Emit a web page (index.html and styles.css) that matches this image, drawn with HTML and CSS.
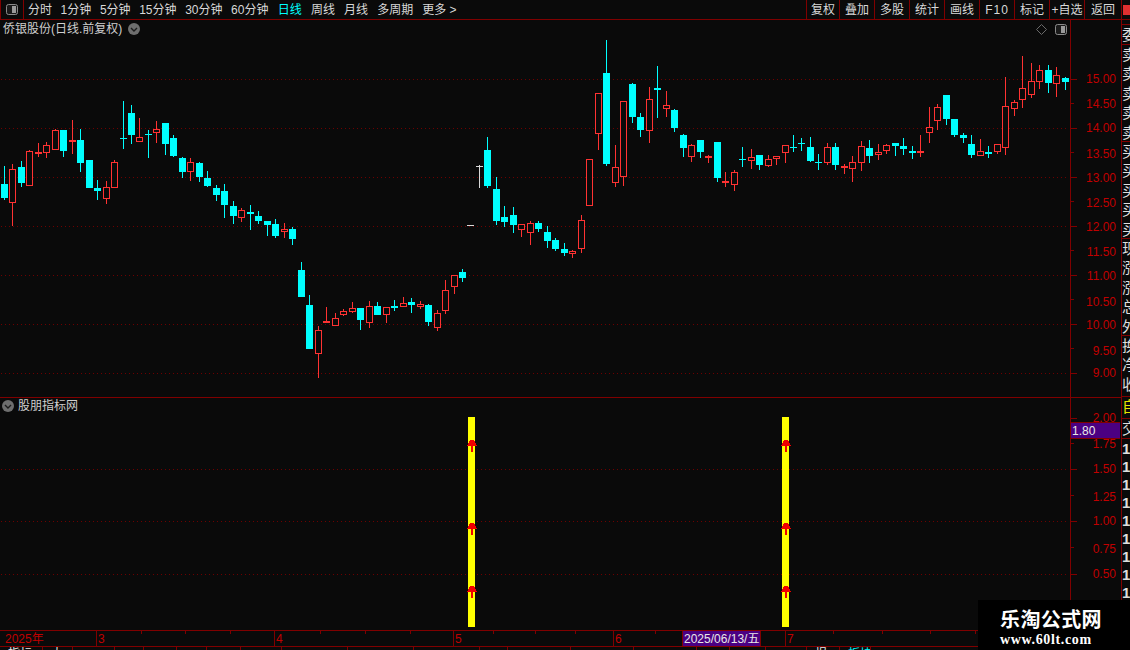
FILE: index.html
```html
<!DOCTYPE html>
<html lang="zh-CN">
<head>
<meta charset="utf-8">
<title>侨银股份 日线</title>
<link rel="stylesheet" href="styles.css">
</head>
<body>
<div class="app">
  <header class="toolbar">
    <div class="layout-btn">
      <svg class="panel-icon" viewBox="0 0 12 11"><rect x="0.5" y="0.5" width="11" height="10" rx="2" class="pi-frame"/><rect x="6" y="2" width="4" height="7" class="pi-fill"/></svg>
    </div>
    <nav class="periods">
      <div class="period-group first">
        <span>分时</span><span>1分钟</span><span>5分钟</span><span>15分钟</span><span>30分钟</span><span>60分钟</span>
      </div>
      <div class="period-group second">
        <span class="active">日线</span><span>周线</span><span>月线</span><span>多周期</span><span>更多 &gt;</span>
      </div>
    </nav>
    <div class="actions">
      <span class="narrow">复权</span><span>叠加</span><span>多股</span><span>统计</span><span>画线</span><span class="fkey">F10</span><span>标记</span><span>+自选</span><span class="wide">返回</span>
    </div>
    <div class="corner"><i class="corner-mark"></i></div>
  </header>

  <div class="workspace">
    <div class="panes">
      <section class="pane pane-main">
        <div class="plot">
          <svg id="main-plot" class="canvas" viewBox="0 20 1070 377" width="1070" height="377"></svg>
          <div class="pane-title title-main">
            <span>侨银股份(日线.前复权)</span>
            <svg class="chev" viewBox="0 0 12 12"><circle cx="6" cy="6" r="6" class="chev-bg"/><path d="M3 5l3 3 3-3" class="chev-line"/></svg>
          </div>
          <div class="plot-tools">
            <svg class="diamond" viewBox="0 0 11 11"><path d="M5.5 .5l5 5-5 5-5-5z"/></svg>
            <svg class="panel-icon" viewBox="0 0 12 11"><rect x="0.5" y="0.5" width="11" height="10" rx="2" class="pi-frame"/><rect x="6" y="2" width="4" height="7" class="pi-fill"/></svg>
          </div>
        </div>
        <div class="axis"><svg id="main-axis" class="canvas" viewBox="1071 20 50 377" width="50" height="377"></svg></div>
      </section>
      <section class="pane pane-sub">
        <div class="plot">
          <svg id="sub-plot" class="canvas" viewBox="0 398 1070 232" width="1070" height="232"></svg>
          <div class="pane-title title-sub">
            <svg class="chev" viewBox="0 0 12 12"><circle cx="6" cy="6" r="6" class="chev-bg"/><path d="M3 5l3 3 3-3" class="chev-line"/></svg>
            <span>股朋指标网</span>
          </div>
        </div>
        <div class="axis"><svg id="sub-axis" class="canvas" viewBox="1071 398 50 232" width="50" height="232"></svg></div>
      </section>
      <div class="timeline"><svg id="time-axis" class="canvas" viewBox="0 631 1121 15" width="1121" height="15"></svg></div>
      <div class="tabs" id="tabs"></div>
    </div>

    <aside class="side">
      <div class="side-block b-top"></div>
      <div class="side-block b-ratio"><p>委比</p></div>
      <div class="side-block b-five"><p>卖</p><p>卖</p><p>卖</p><p>卖</p><p>卖</p></div>
      <div class="side-block b-five"><p>买</p><p>买</p><p>买</p><p>买</p><p>买</p></div>
      <div class="side-block b-five"><p>现</p><p>涨</p><p>涨</p><p>总</p><p>外</p></div>
      <div class="side-block b-three"><p>换</p><p>净</p><p>收</p></div>
      <div class="side-block b-self"><p>自</p></div>
      <div class="side-block b-deal"><p>交</p></div>
      <div class="side-ticks"><p>1</p><p>1</p><p>1</p><p>1</p><p>1</p><p>1</p><p>1</p><p>1</p><p>1</p></div>
    </aside>
  </div>

  <div class="watermark">
    <strong>乐淘公式网</strong>
    <em>www.60lt.com</em>
  </div>
</div>
<script src="chart.js"></script>
</body>
</html>
```
FILE: styles.css
```css
* { box-sizing: border-box; }
html, body { margin: 0; padding: 0; background: #0a0a0a; }
body { width: 1130px; height: 650px; overflow: hidden; font: 12px/1 "Liberation Sans", "Noto Sans CJK SC", sans-serif; color: #d8d8d8; }
p { margin: 0; }

.app { position: relative; width: 1130px; height: 650px; display: flex; flex-direction: column; }

.toolbar { flex: none; height: 20px; display: flex; align-items: stretch; border-bottom: 1px solid #800000; }
.layout-btn { flex: none; width: 24px; display: flex; align-items: center; justify-content: center; border-left: 1px solid #800000; border-right: 1px solid #800000; }
.panel-icon { width: 12px; height: 11px; display: block; }
.pi-frame { fill: #1a1a1a; stroke: #8a8a8a; stroke-width: 1; }
.pi-fill { fill: #9a9a9a; }

.periods { flex: none; width: 782px; display: flex; align-items: center; padding-left: 4px; }
.period-group { display: flex; }
.period-group.first { gap: 8.6px; }
.period-group.second { gap: 9.1px; margin-left: 9.4px; }
.active { color: #00ffff; }

.actions { flex: none; display: flex; }
.actions span { width: 35px; border-left: 1px solid #800000; display: flex; align-items: center; justify-content: center; }
.actions .narrow { width: 33px; }
.actions .wide { width: 37px; }
.actions .fkey { letter-spacing: 1px; }
.corner { flex: 1; border-left: 1px solid #800000; display: flex; justify-content: flex-end; align-items: center; }
.corner-mark { width: 7px; height: 10px; background: #e03030; display: block; }

.workspace { flex: 1; min-height: 0; display: flex; }
.panes { flex: none; width: 1121px; display: flex; flex-direction: column; }
.pane { flex: none; display: flex; }
.pane-main { height: 378px; border-bottom: 1px solid #800000; }
.pane-sub { height: 232px; }
.plot { position: relative; flex: none; width: 1070px; }
.axis { flex: none; width: 51px; border-left: 1px solid #800000; }
.canvas { display: block; }

.pane-title { position: absolute; display: flex; align-items: center; gap: 6px; color: #cfcfcf; }
.title-main { left: 3px; top: 3px; }
.title-sub { left: 2px; top: 2px; gap: 4px; }
.chev { width: 12px; height: 12px; display: block; }
.chev-bg { fill: #6e6e6e; }
.chev-line { fill: none; stroke: #1c1c1c; stroke-width: 1.4; }
.plot-tools { position: absolute; right: 3px; top: 4px; display: flex; align-items: center; gap: 8px; }
.diamond { width: 11px; height: 11px; display: block; }
.diamond path { fill: none; stroke: #6a6a6a; }

.timeline { flex: none; height: 17px; border-top: 1px solid #800000; border-bottom: 1px solid #800000; }
.tabs { flex: 1; display: flex; overflow: hidden; }
.tab { flex: none; height: 3px; border-right: 1px solid #800000; overflow: hidden; padding-left: 8px; line-height: 14px; white-space: nowrap; color: #e8e8e8; }
.tab-active { color: #00ffff; }

.side { flex: 1; min-width: 0; border-left: 1px solid #800000; overflow: hidden; font-size: 15px; color: #dedede; }
.side p { white-space: nowrap; height: 19.4px; line-height: 19.4px; }
.side-block { border-bottom: 1px solid #800000; overflow: hidden; }
.b-top { height: 5px; }
.b-ratio { height: 20px; }
.b-five { height: 97px; }
.b-three { height: 61px; }
.b-self { height: 22px; color: #e6e600; }
.b-deal { height: 20px; }
.side-ticks p { height: 18px; line-height: 18px; font-weight: bold; }
.side-ticks { padding-top: 1px; }

.watermark { position: absolute; left: 978px; top: 600px; width: 152px; height: 50px; background: #000; color: #fff; display: flex; flex-direction: column; align-items: flex-start; padding: 8px 0 0 22px; }
.watermark strong { font: bold 20px/22px "Noto Sans CJK SC", sans-serif; width: 102px; letter-spacing: .4px; white-space: nowrap; }
.watermark em { font: bold 14px/16px "Liberation Serif", serif; margin-top: 2px; letter-spacing: .65px; }

.grid { stroke: #6e0000; stroke-width: 1; stroke-dasharray: 1 3; fill: none; }
.wick-c { fill: #00ffff; }
.wick-r { fill: #ff3232; }
.wick-w { fill: #d8d8d8; }
.body-hollow { fill: #0a0a0a; stroke: #ff3232; stroke-width: 1; }
.bar { fill: #ffff00; }
.arrow { fill: #f00000; shape-rendering: crispEdges; }
.tick { fill: #800000; }
.label { fill: #c00000; font-size: 12px; }
.tag { fill: #4b0082; }
.tag-text { fill: #e8e8e8; font-size: 12px; }
```
FILE: chart.js
```js
var NS = "http://www.w3.org/2000/svg";
function el(parent, name, attrs, text) {
  var n = document.createElementNS(NS, name);
  for (var k in attrs) n.setAttribute(k, attrs[k]);
  if (text) n.textContent = text;
  parent.appendChild(n);
  return n;
}
function rect(p, x, y, w, h, cls) { el(p, "rect", { x: x, y: y, width: w, height: h, "class": cls }); }

/* type, wick top, wick bottom, body top, body bottom; "R" is a filled red body */
var groups = [
  { o: 100, s: 3, rows: [
    ["c",198,300,252,294],["r",192,378,208,308],["c",183,261,201,249],["r",150,258,154,257],["R",129,171,156,161],
    ["r",126,174,136,158],["r",88,150,91,149],["c",90,171,90,153],["R",60,162,120,126],["c",87,216,120,189],
    ["c",180,264,180,264],["c",240,300,264,273],["r",243,312,262,296],["r",180,264,187,263],["c",3,147,114,117],
    ["c",15,132,39,105],["r",54,126,112,125],["c",90,174,102,105],["r",63,129,88,98],["c",69,165,69,132],
    ["c",105,171,114,168],["c",171,234,174,216],["r",174,243,187,215],["c",186,246,189,231],["c",213,261,234,258],
    ["c",255,303,264,285],["c",252,354,273,315],["c",303,372,318,348],["r",324,366,331,353],["c",315,390,336,342],
    ["c",333,372,348,363],["c",363,408,363,375],["c",357,414,372,408],["r",369,414,388,396],["c",381,435,387,417]
  ]},
  { o: 250, s: 3, rows: [
    ["c",36,141,60,141],["c",135,297,165,297],["r",228,384,240,312],["R",171,219,213,219],["r",189,228,205,228],
    ["r",178,198,184,194],["r",156,189,175,185],["c",174,240,174,210],["r",153,234,169,219],["c",156,195,168,195],
    ["r",172,219,172,195],["c",150,183,168,174],["r",141,171,160,171],["c",144,189,156,165],["r",153,177,163,171],
    ["c",162,228,165,216],["r",180,243,190,233],["r",90,192,121,183],["r",75,132,76,110],["c",57,96,66,84]
  ]},
  { o: 0, s: 1, rows: [
    ["w",225,226,225,226],["w",165,188,166,167],["c",137,188,150,186],["c",177,225,189,221],["c",206,227,217,222],
    ["c",207,233,215,225],["r",224,237,224,230],["r",221,245,223,233],["c",221,232,223,229],["c",226,248,232,241],
    ["c",238,251,240,249],["c",243,256,249,253],["r",250,258,251,254],["r",215,253,220,249],["r",159,206,159,206]
  ]},
  { o: 30, s: 3, rows: [
    ["r",190,360,190,311],["c",30,408,129,402],["r",345,471,412,458],["r",213,468,214,440],["c",159,279,162,261],
    ["c",249,321,261,300],["r",171,339,208,302],["c",108,264,174,180],["r",183,261,226,236],["c",237,306,240,294],
    ["c",312,381,315,354],["r",342,396,346,381],["c",330,384,330,366],["R",375,399,378,384],["c",336,456,336,444],
    ["R",426,471,453,459],["r",420,483,427,465],["c",351,411,387,390],["r",357,417,382,392],["c",375,420,375,405],
    ["r",375,411,388,407],["r",378,405,379,388],["r",345,399,346,368],["c",315,366,351,354],["c",324,363,339,342],
    ["c",321,396,351,393],["c",372,420,396,399],["r",339,405,352,398],["c",339,420,351,405]
  ]},
  { o: 50, s: 3, rows: [
    ["R",342,372,348,354],["r",318,396,337,356],["r",274,363,289,338],["c",270,339,294,318],["r",282,330,305,314],
    ["r",283,312,286,302],["c",279,318,279,288],["c",264,315,288,297],["c",288,327,303,309],["R",255,321,303,309],
    ["r",171,279,232,250],["r",162,240,172,212],["c",135,225,135,207],["c",207,261,207,255],["c",250,279,255,264],
    ["c",255,324,282,315],["r",267,318,304,317],["c",288,324,306,312],["r",282,312,283,305],["r",81,315,169,293],
    ["r",150,198,157,176],["r",18,174,115,149],["r",39,144,94,134],["r",45,117,61,95],["c",45,129,60,99],
    ["r",51,141,76,101],["c",81,120,84,96]
  ]}
];

var mainPlot = document.getElementById("main-plot");
[79, 128, 177, 226, 275, 324, 373].forEach(function (y) {
  el(mainPlot, "line", { x1: 1, y1: y + 0.5, x2: 1067, y2: y + 0.5, "class": "grid" });
});

var idx = 0;
groups.forEach(function (g) {
  g.rows.forEach(function (r) {
    var x = Math.floor(4.2 + idx * 8.487);
    var y = function (v) { return Math.round(g.o + v / g.s); };
    var wt = y(r[1]), wb = y(r[2]), bt = y(r[3]), bb = y(r[4]);
    var t = r[0];
    if (bb <= bt) bb = bt + 1;
    if (t === "w" && wb - wt > 2) {
      rect(mainPlot, x, wt, 1, wb - wt, "wick-w");
      rect(mainPlot, x - 3, bt, 7, 1, "wick-w");
    } else if (t === "w") {
      rect(mainPlot, x - 3, bt, 7, 1, "wick-w");
    } else if (t === "r") {
      rect(mainPlot, x, wt, 1, wb - wt, "wick-r");
      el(mainPlot, "rect", { x: x - 2.5, y: bt + 0.5, width: 6, height: Math.max(bb - bt - 1, 1), "class": "body-hollow" });
    } else {
      var cls = t === "R" ? "wick-r" : "wick-c";
      rect(mainPlot, x, wt, 1, wb - wt, cls);
      rect(mainPlot, x - 3, bt, 7, bb - bt, cls);
    }
    idx++;
  });
});

function axis(svg, labels, ticks) {
  ticks.forEach(function (t) { rect(svg, 1071, t[0], t[1], 1, "tick"); });
  labels.forEach(function (l) {
    el(svg, "text", { x: 1116, y: l[1] + 4, "text-anchor": "end", "class": "label" }, l[0]);
  });
}

axis(document.getElementById("main-axis"),
  [["15.00",79],["14.50",104],["14.00",128],["13.50",154],["13.00",178],["12.50",203],["12.00",227],
   ["11.50",252],["11.00",276],["10.50",302],["10.00",325],["9.50",351],["9.00",373]],
  [[79,6],[103,3],[128,6],[152,3],[177,6],[201,3],[226,6],[250,3],[275,6],[299,3],[324,6],[348,3],[373,6]]);

var subAxis = document.getElementById("sub-axis");
axis(subAxis,
  [["2.00",418],["1.75",444],["1.50",469],["1.25",497],["1.00",521],["0.75",549],["0.50",574]],
  [[418,6],[443,3],[469,6],[495,3],[521,6],[547,3],[574,6]]);
rect(subAxis, 1071, 422, 49, 17, "tick");
rect(subAxis, 1071, 423, 49, 15, "tag");
el(subAxis, "text", { x: 1072, y: 435, "class": "tag-text" }, "1.80");

var subPlot = document.getElementById("sub-plot");
[469, 521, 574].forEach(function (y) {
  el(subPlot, "line", { x1: 1, y1: y + 0.5, x2: 1067, y2: y + 0.5, "class": "grid" });
});
[[468, 471], [782, 785]].forEach(function (b) {
  rect(subPlot, b[0], 417, 7, 210, "bar");
  [440, 523, 586].forEach(function (y) {
    var c = b[1];
    el(subPlot, "polygon", {
      points: [c - 1, y, c + 3, y, c + 4, y + 2, c + 5, y + 4, c + 6, y + 6, c + 2, y + 6, c + 2, y + 12,
               c, y + 12, c, y + 6, c - 4, y + 6, c - 3, y + 4, c - 2, y + 2].join(","),
      "class": "arrow"
    });
  });
});

var time = document.getElementById("time-axis");
[96, 274, 453, 613, 682, 760, 785].forEach(function (x) { rect(time, x, 631, 1, 15, "tick"); });
[141, 185, 230, 320, 365, 410, 493, 535, 575, 655, 833, 882, 930, 975, 1020, 1065].forEach(function (x) {
  rect(time, x, 631, 1, 3, "tick");
});
rect(time, 1070, 631, 1, 15, "tick");
[["2025年", 5], ["3", 98], ["4", 276], ["5", 455], ["6", 615], ["7", 787]].forEach(function (l) {
  el(time, "text", { x: l[1], y: 643, "class": "label" }, l[0]);
});
rect(time, 683, 631, 77, 15, "tag");
el(time, "text", { x: 684, y: 643, "class": "tag-text" }, "2025/06/13/五");

var tabs = [[43,"指标"],[30,"大"],[42,""],[29,""],[33,""],[30,""],[34,""],[41,""],[66,""],[66,""],[66,""],[28,""],
            [63,""],[63,""],[63,""],[33,""],[36,""],[41,""],[33,"报"],[31,"板块","tab-active"]];
var bar = document.getElementById("tabs");
tabs.forEach(function (t) {
  var d = document.createElement("div");
  d.className = "tab" + (t[2] ? " " + t[2] : "");
  d.style.width = t[0] + "px";
  d.textContent = t[1];
  bar.appendChild(d);
});
```
